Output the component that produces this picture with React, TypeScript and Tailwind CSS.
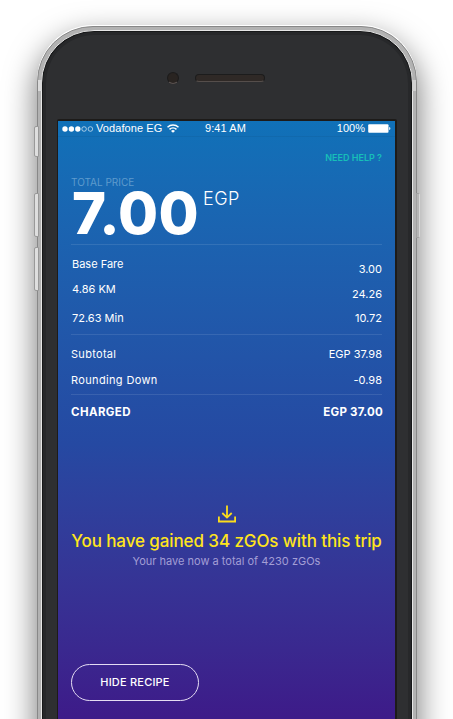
import React from 'react';

const Signal = () => (
  <svg width="32" height="8" viewBox="0 0 32 8" fill="#fff">
    <circle cx="3" cy="4" r="2.7" />
    <circle cx="9.4" cy="4" r="2.7" />
    <circle cx="15.8" cy="4" r="2.7" />
    <circle cx="22.1" cy="4" r="2.3" fill="none" stroke="#fff" strokeWidth=".6" />
    <circle cx="28.4" cy="4" r="2.3" fill="none" stroke="#fff" strokeWidth=".6" />
  </svg>
);

const Wifi = () => (
  <svg width="12" height="9" viewBox="0 0 12 9" fill="none" stroke="#fff" strokeWidth="1.5">
    <path d="M.5 3.3a7.8 7.8 0 0 1 11 0" />
    <path d="M2.5 5.4a5 5 0 0 1 7 0" />
    <path d="M6 8.8 4 6.9a2.9 2.9 0 0 1 4 0z" fill="#fff" stroke="none" />
  </svg>
);

const Battery = () => (
  <svg width="23" height="9" viewBox="0 0 23 9" fill="#fff">
    <rect x=".2" y=".2" width="20.3" height="8.6" rx="1" />
    <path d="M21.2 3c1.6.3 1.6 2.7 0 3z" />
  </svg>
);

const Download = () => (
  <svg width="18" height="18" viewBox="0 0 18 18" fill="none" stroke="#fbdc1c" strokeWidth="1.8">
    <path d="M9 .5v12M4.3 8 9 12.6 13.7 8M.9 11.5v5h16.2v-5" />
  </svg>
);

const Rule = () => <div className="h-px bg-white/10" />;

export default function App() {
  return (
    <div className="relative h-[719px] w-[453px] overflow-hidden bg-white font-['Inter',sans-serif] text-white">
      <div className="absolute left-[34px] top-[126px] h-[31px] w-[5px] rounded-l-[2px] border border-[#999] bg-[#dedede]" />
      <div className="absolute left-[34px] top-[193px] h-[44px] w-[5px] rounded-l-[2px] border border-[#999] bg-[#dedede]" />
      <div className="absolute left-[34px] top-[247px] h-[44px] w-[5px] rounded-l-[2px] border border-[#999] bg-[#dedede]" />

      <div className="ml-[37px] mt-[26px] h-[900px] w-[380px] rounded-[56px] border border-[#888] bg-[#b2b2b2] px-[3px] pt-[3px] shadow-[0_-1px_0_#fff,0_12px_30px_2px_rgba(0,0,0,0.5)]">
        <div className="h-full w-full rounded-[53px] border border-[#e6e6e6] bg-[#171819] px-px pt-px">
          <div className="h-full w-full rounded-[51px] border-x-[3px] border-t-[3px] border-[#27282a] bg-[#2e2f31] px-[11px]">
            <div className="flex h-[84px] items-start pl-[110px] pt-[36px]">
              <div className="mt-px h-[12px] w-[12px] rounded-full border border-[#1c1c1c] border-b-[#5a5250] bg-[#292421]" />
              <div className="ml-[16px] mt-[3px] h-[8px] w-[70px] rounded-full border border-[#1c1c1c] border-b-[#554e4b] bg-[#2f2926]" />
            </div>

            <div className="h-[650px] rounded-t-[2px] border-2 border-l border-[#1d1b19] bg-linear-to-b from-[#1071b8] from-0% via-[#2549a2] via-50% to-[#3d1b89] to-[92%]">
              <div className="flex h-[15px] items-center pl-[4px] pr-[4px] font-['Liberation_Sans',sans-serif] text-[11px] leading-[15px]">
                <Signal />
                <span className="ml-[2px] w-[67px] whitespace-nowrap tracking-[0.08px]">Vodafone EG</span>
                <span className="ml-[4px]"><Wifi /></span>
                <span className="ml-[26px] whitespace-nowrap tracking-[0.1px]">9:41 AM</span>
                <span className="ml-auto mr-[3px]">100%</span>
                <Battery />
              </div>
              <div className="h-px bg-black/5" />

              <div className="px-[13px]">
                <div className="flex h-[38px] justify-end pt-[11px] text-[9px] font-semibold leading-[20px] text-[#17bfb8]">NEED HELP ?</div>
                <div className="h-[13px] text-[10px] leading-[14px] text-[#5e9bcd]">TOTAL PRICE</div>
                <div className="flex h-[56px]">
                  <span className="ml-px w-[125px] text-[58px] font-extrabold leading-[50px] tracking-[0.3px]">7.00</span>
                  <span className="ml-[6px] text-[18px] leading-[22px] tracking-[0.5px] font-light">EGP</span>
                </div>
                <Rule />
                <div className="flex h-[89px] justify-between text-[11px] leading-[20px]">
                  <div className="pl-px pt-[9px]">
                    <div className="h-[25px]">Base Fare</div>
                    <div className="h-[29px]">4.86 KM</div>
                    <div>72.63 Min</div>
                  </div>
                  <div className="pt-[14px] text-right">
                    <div className="h-[25px]">3.00</div>
                    <div className="h-[24px]">24.26</div>
                    <div>10.72</div>
                  </div>
                </div>
                <Rule />
                <div className="h-[59px] pt-[9px] text-[11px] leading-[20px]">
                  <div className="flex h-[26px] justify-between"><span className="tracking-[0.3px]">Subtotal</span><span>EGP 37.98</span></div>
                  <div className="flex justify-between"><span className="tracking-[0.35px]">Rounding Down</span><span>-0.98</span></div>
                </div>
                <Rule />
                <div className="-mr-px flex h-[110px] justify-between pt-[7px] text-[11.5px] font-bold leading-[20px]"><span className="tracking-[0.4px]">CHARGED</span><span className="tracking-[0.25px]">EGP 37.00</span></div>
                <div className="flex flex-col items-center whitespace-nowrap">
                  <Download />
                  <div className="mt-[6px] text-[17px] font-[450] leading-[24px] tracking-[-0.1px] text-[#ffe51c]">You have gained 34 zGOs with this trip</div>
                  <div className="text-[11px] leading-[16px] text-[#a39ed5]">Your have now a total of 4230 zGOs</div>
                </div>
                <button className="mt-[95px] flex h-[37px] w-[128px] items-center justify-center rounded-full border-[1.5px] border-[#e4dcf3] text-[11px] font-medium tracking-[0.2px]">HIDE RECIPE</button>
              </div>
            </div>
          </div>
        </div>
      </div>

      <div className="absolute left-[38px] top-[80px] h-[11px] w-[4px] bg-[#dadada]" />
      <div className="absolute left-[412px] top-[80px] h-[11px] w-[4px] bg-[#d0d0d0]" />
      <div className="absolute left-[416px] top-[193px] h-[45px] w-[4px] rounded-r-[2px] border border-[#a0a0a0] border-r-[#d8d8d8] bg-[#b5b5b5]" />
    </div>
  );
}
